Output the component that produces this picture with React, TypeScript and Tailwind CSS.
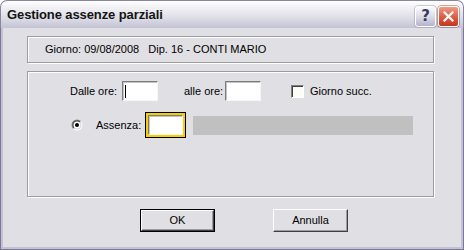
import React from "react";

function Sunken({ className = "", children }: { className?: string; children?: React.ReactNode }) {
  return (
    <div
      className={
        "bg-white border border-t-[#7c7c7c] border-l-[#7c7c7c] border-b-[#f7f6f2] border-r-[#f7f6f2] shadow-[inset_1px_1px_0_#c4c3c8] flex items-center " +
        className
      }
    >
      {children}
    </div>
  );
}

function Radio() {
  return (
    <svg width="12" height="12" viewBox="0 0 12 12">
      <defs>
        <linearGradient id="ro" x1="0" y1="0" x2="1" y2="1">
          <stop offset="0.45" stopColor="#808080" />
          <stop offset="0.55" stopColor="#ffffff" />
        </linearGradient>
        <linearGradient id="ri" x1="0" y1="0" x2="1" y2="1">
          <stop offset="0.45" stopColor="#404040" />
          <stop offset="0.55" stopColor="#d4d0c8" />
        </linearGradient>
      </defs>
      <circle cx="6" cy="6" r="5.5" fill="url(#ro)" />
      <circle cx="6" cy="6" r="4.5" fill="url(#ri)" />
      <circle cx="6" cy="6" r="3.5" fill="#ffffff" />
      <circle cx="6" cy="6" r="2" fill="#000000" />
    </svg>
  );
}

function Button({ label, isDefault }: { label: string; isDefault?: boolean }) {
  return (
    <div
      className={
        "w-[75px] h-[23px] " + (isDefault ? "border border-black" : "")
      }
    >
      <div className="w-full h-full bg-[#e0dfe3] border border-t-white border-l-white border-b-[#404040] border-r-[#404040] shadow-[inset_-1px_-1px_0_#9d9da1] flex items-center justify-center">
        {label}
      </div>
    </div>
  );
}

export default function App() {
  return (
    <div className="w-[464px] h-[250px] flex flex-col font-['Liberation_Sans',Arial,sans-serif] text-[11px] text-black bg-white">
      {/* Title bar */}
      <div className="h-[28px] shrink-0 rounded-t-[7px] border border-b-0 border-[#8886a2] bg-[linear-gradient(to_bottom,#ffffff_0%,#eeeef3_30%,#dcdce5_65%,#c3c2d4_100%)] flex items-center pl-[6px] pr-[4px]">
        <span className="font-bold text-[13px] text-[#141414] tracking-[-0.1px]">Gestione assenze parziali</span>
        <div className="ml-auto flex gap-[2px] mt-[4px]">
          <div className="w-[21px] h-[21px] rounded-[3px] border border-white bg-[linear-gradient(to_bottom,#fbfbfd,#d5d5e2_60%,#b4b3c9)] shadow-[0_0_0_0.5px_#9a99b2] flex items-center justify-center">
            <span className="font-bold text-[15px] leading-none text-[#3c3b5e] font-['DejaVu_Sans',sans-serif]">?</span>
          </div>
          <div className="w-[21px] h-[21px] rounded-[3px] border border-white bg-[linear-gradient(to_bottom,#f29a85,#df5a43_55%,#c4361f)] shadow-[0_0_0_0.5px_#9a5a50] flex items-center justify-center">
            <svg width="11" height="11" viewBox="0 0 11 11">
              <path d="M1.5 1.5 L9.5 9.5 M9.5 1.5 L1.5 9.5" stroke="#ffffff" strokeWidth="2.2" strokeLinecap="square" />
            </svg>
          </div>
        </div>
      </div>

      {/* Frame + client */}
      <div className="flex-1 flex border border-t-0 border-[#7a7892] bg-[#c3c2d4] px-[2px] pb-[2px]">
        <div className="flex-1 bg-[#e0dfe3] flex flex-col">
          {/* Group 1 */}
          <div className="ml-[24px] mt-[8px] w-[407px] h-[27px] border border-[#9d9da1] shadow-[1px_1px_0_#ffffff,inset_1px_1px_0_#ffffff] flex items-center pl-[17px]">
            <span className="whitespace-pre">Giorno: 09/08/2008   Dip. 16 - CONTI MARIO</span>
          </div>

          {/* Group 2 */}
          <div className="ml-[24px] mt-[8px] w-[407px] h-[126px] border border-[#9d9da1] shadow-[1px_1px_0_#ffffff,inset_1px_1px_0_#ffffff] flex flex-col">
            {/* Row 1 */}
            <div className="mt-[9px] h-[20px] flex items-center pl-[42px]">
              <span className="w-[52px]">Dalle ore:</span>
              <Sunken className="w-[36px] h-[20px]">
                <div className="ml-[2px] w-px h-[13px] bg-black" />
              </Sunken>
              <span className="w-[67px] pl-[26px]">alle ore:</span>
              <Sunken className="w-[36px] h-[20px]" />
              <div className="ml-[30px] w-[13px] h-[13px] bg-[#fcfcf8] border border-t-[#808080] border-l-[#808080] border-b-white border-r-white shadow-[inset_1px_1px_0_#404040]" />
              <span className="ml-[6px]">Giorno succ.</span>
            </div>
            {/* Row 2 */}
            <div className="mt-[11px] h-[26px] flex items-center pl-[43px]">
              <Radio />
              <span className="ml-[13px] w-[49px]">Assenza:</span>
              <div className="w-[41px] h-[26px] border border-black bg-[#f6cf00] p-[2px] flex">
                <Sunken className="flex-1" />
              </div>
              <div className="ml-[7px] w-[220px] h-[19px] bg-[#c0c0c0]" />
            </div>
          </div>

          {/* Buttons */}
          <div className="mt-[12px] flex pl-[137px] gap-[58px]">
            <Button label="OK" isDefault />
            <Button label="Annulla" />
          </div>
        </div>
      </div>
    </div>
  );
}
